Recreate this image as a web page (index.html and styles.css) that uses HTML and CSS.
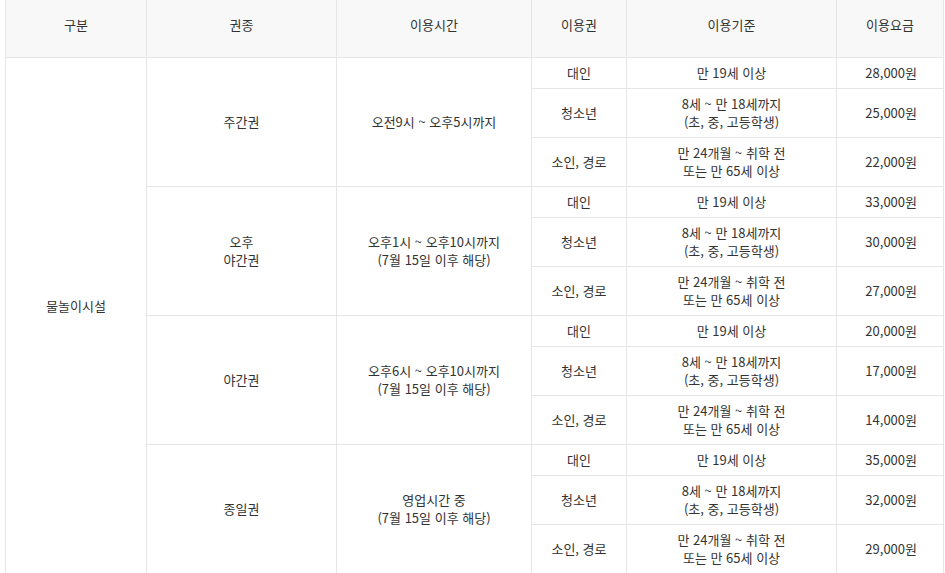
FILE: index.html
```html
<!DOCTYPE html>
<html lang="ko">
<head>
<meta charset="utf-8">
<link rel="stylesheet" href="styles.css">
</head>
<body>
<div class="wrap">
<table class="fee">
  <colgroup>
    <col class="c1"><col class="c2"><col class="c3"><col class="c4"><col class="c5"><col class="c6">
  </colgroup>
  <thead>
    <tr>
      <th>구분</th><th>권종</th><th>이용시간</th><th>이용권</th><th>이용기준</th><th>이용요금</th>
    </tr>
  </thead>
  <tbody>
    <tr class="one">
      <td rowspan="12" class="cat">물놀이시설</td>
      <td rowspan="3">주간권</td>
      <td rowspan="3">오전9시 ~ 오후5시까지</td>
      <td>대인</td><td>만 19세 이상</td><td class="price">28,000원</td>
    </tr>
    <tr class="two"><td>청소년</td><td>8세 ~ 만 18세까지<br>(초, 중, 고등학생)</td><td class="price">25,000원</td></tr>
    <tr class="two"><td>소인, 경로</td><td>만 24개월 ~ 취학 전<br>또는 만 65세 이상</td><td class="price">22,000원</td></tr>

    <tr class="one">
      <td rowspan="3">오후<br>야간권</td>
      <td rowspan="3">오후1시 ~ 오후10시까지<br>(7월 15일 이후 해당)</td>
      <td>대인</td><td>만 19세 이상</td><td class="price">33,000원</td>
    </tr>
    <tr class="two"><td>청소년</td><td>8세 ~ 만 18세까지<br>(초, 중, 고등학생)</td><td class="price">30,000원</td></tr>
    <tr class="two"><td>소인, 경로</td><td>만 24개월 ~ 취학 전<br>또는 만 65세 이상</td><td class="price">27,000원</td></tr>

    <tr class="one">
      <td rowspan="3">야간권</td>
      <td rowspan="3">오후6시 ~ 오후10시까지<br>(7월 15일 이후 해당)</td>
      <td>대인</td><td>만 19세 이상</td><td class="price">20,000원</td>
    </tr>
    <tr class="two"><td>청소년</td><td>8세 ~ 만 18세까지<br>(초, 중, 고등학생)</td><td class="price">17,000원</td></tr>
    <tr class="two"><td>소인, 경로</td><td>만 24개월 ~ 취학 전<br>또는 만 65세 이상</td><td class="price">14,000원</td></tr>

    <tr class="one">
      <td rowspan="3">종일권</td>
      <td rowspan="3">영업시간 중<br>(7월 15일 이후 해당)</td>
      <td>대인</td><td>만 19세 이상</td><td class="price">35,000원</td>
    </tr>
    <tr class="two"><td>청소년</td><td>8세 ~ 만 18세까지<br>(초, 중, 고등학생)</td><td class="price">32,000원</td></tr>
    <tr class="two"><td>소인, 경로</td><td>만 24개월 ~ 취학 전<br>또는 만 65세 이상</td><td class="price">29,000원</td></tr>
  </tbody>
</table>
</div>
</body>
</html>
```

FILE: styles.css
```css
html, body {
  margin: 0;
  padding: 0;
  background: #fff;
}

.wrap {
  padding-left: 5px;
}

.fee {
  border-collapse: collapse;
  table-layout: fixed;
  width: 938px;
  font-family: "Noto Sans CJK KR", "Noto Sans", sans-serif;
  font-size: 13px;
  line-height: 18px;
  color: #333;
}

.c1 { width: 141px; }
.c2 { width: 190px; }
.c3 { width: 195px; }
.c4 { width: 95px; }
.c5 { width: 210px; }
.c6 { width: 107px; }

.fee th,
.fee td {
  border: 1px solid #e6e6e6;
  text-align: center;
  vertical-align: middle;
  padding: 6px 4px;
}

.fee thead th {
  border-top: none;
  background: #f8f8f8;
  font-weight: normal;
  color: #333;
  height: 57px;
  box-sizing: border-box;
  padding: 15px 4px 22px;
}

.fee tr.one td { height: 30px; box-sizing: border-box; }
.fee tr.two td { height: 48px; box-sizing: border-box; }

.fee td.cat {
  padding-bottom: 24px;
}

.fee td.price {
  text-align: right;
  padding-right: 26px;
}
```
